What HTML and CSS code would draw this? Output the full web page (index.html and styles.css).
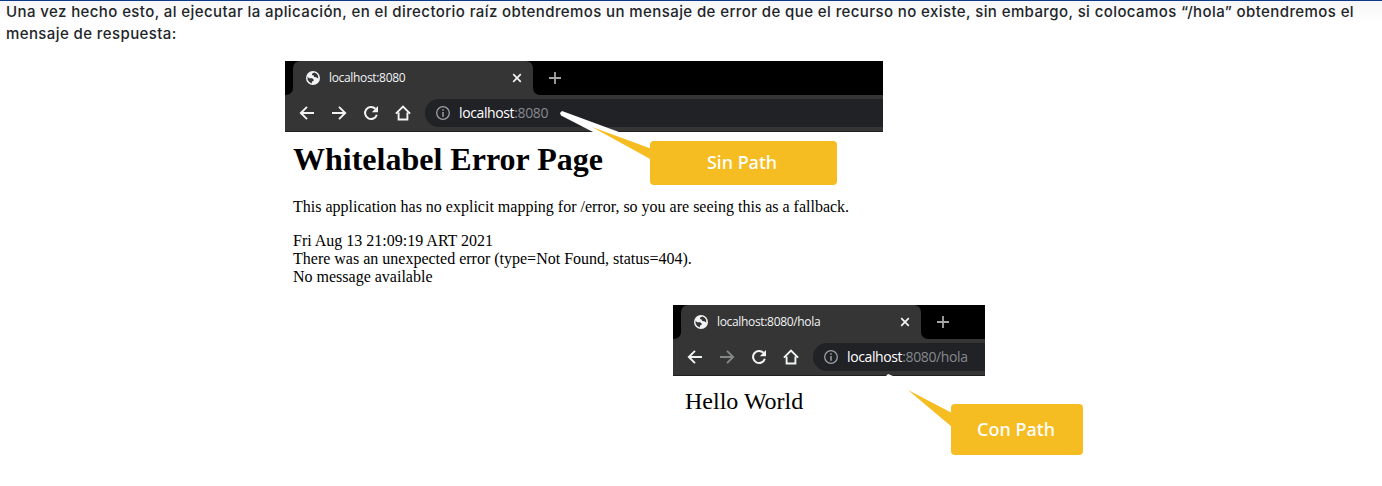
FILE: index.html
```
<!DOCTYPE html>
<html lang="es">
<head>
<meta charset="utf-8">
<title>Mensaje de respuesta</title>
<link rel="stylesheet" href="styles.css">
</head>
<body>
<svg class="defs" width="0" height="0" aria-hidden="true">
  <symbol id="globe" viewBox="0 0 14 14"><circle cx="7" cy="7" r="7" fill="#f1f3f4"/><path d="M1.5 5.8L3.2 7.2H6.2L7.6 8.6V9.9L6 10.6L5.8 12.4L3.2 11L1.7 8.7ZM8.2 1.6L6 2.7V4.1L7.7 4.4L8.2 6.1L10.2 6.3L12.3 7.6L12 4.6L10.4 2.5Z" fill="#353535"/></symbol>
  <symbol id="close" viewBox="0 0 10 10"><path d="M1.2 1.2L8.8 8.8M8.8 1.2L1.2 8.8" fill="none" stroke="#f1f3f4" stroke-width="1.7"/></symbol>
  <symbol id="plus" viewBox="0 0 12 12"><path d="M6 0V12M0 6H12" fill="none" stroke="#a5a5a5" stroke-width="1.8"/></symbol>
  <symbol id="back" viewBox="0 0 16 16"><path d="M15 8H2M8 1.8L1.8 8L8 14.2" fill="none" stroke="currentColor" stroke-width="1.9"/></symbol>
  <symbol id="forward" viewBox="0 0 16 16"><path d="M1 8H14M8 1.8L14.2 8L8 14.2" fill="none" stroke="currentColor" stroke-width="1.9"/></symbol>
  <symbol id="reload" viewBox="0 0 16 16"><path d="M13.8 9.7A6 6 0 1 1 12.4 3.8" fill="none" stroke="#f1f3f4" stroke-width="2"/><path d="M15 1V7.2H8.8Z" fill="#f1f3f4"/></symbol>
  <symbol id="home" viewBox="0 0 16 16"><path d="M.9 8.6L8 1.5L15.1 8.6M3.6 7.5V14.5H12.4V7.5" fill="none" stroke="#f1f3f4" stroke-width="1.9"/></symbol>
  <symbol id="info" viewBox="0 0 14 14"><circle cx="7" cy="7" r="6.3" fill="none" stroke="#9aa0a6" stroke-width="1.3"/><path d="M7 3.2V4.8M7 6V10.7" stroke="#9aa0a6" stroke-width="1.5"/></symbol>
</svg>
<main class="article">
  <p class="intro"><span class="line first">Una vez hecho esto, al ejecutar la aplicación, en el directorio raíz obtendremos un mensaje de error de que el recurso no existe, sin embargo, si colocamos “/hola” obtendremos el</span> <span class="line second">mensaje de respuesta:</span></p>

  <section class="shot shot-error">
    <div class="browser">
      <div class="tabs">
        <div class="corner"></div>
        <div class="tab"><svg class="globe"><use href="#globe"/></svg><span class="tab-title">localhost:8080</span><svg class="close"><use href="#close"/></svg></div>
        <div class="rest"><svg class="plus"><use href="#plus"/></svg></div>
      </div>
      <div class="toolbar">
        <svg class="nav"><use href="#back"/></svg><svg class="nav"><use href="#forward"/></svg><svg class="nav"><use href="#reload"/></svg><svg class="nav"><use href="#home"/></svg>
        <div class="address"><svg class="info"><use href="#info"/></svg><span class="url"><b>localhost</b>:8080</span></div>
      </div>
    </div>
    <div class="page">
      <h1>Whitelabel Error Page</h1>
      <p class="fallback">This application has no explicit mapping for /error, so you are seeing this as a fallback.</p>
      <div>Fri Aug 13 21:09:19 ART 2021</div>
      <div>There was an unexpected error (type=Not Found, status=404).</div>
      <div>No message available</div>
    </div>
    <svg class="tail tail-sin" viewBox="0 0 92 50"><path d="M0 2L2 0L59 21H33L1 4.5Z" fill="#fff"/><path d="M32 16L92 38V49Z" fill="#f5bd22"/></svg>
    <div class="callout sin">Sin Path</div>
  </section>

  <section class="shot shot-hello">
    <div class="browser">
      <div class="tabs">
        <div class="corner"></div>
        <div class="tab"><svg class="globe"><use href="#globe"/></svg><span class="tab-title">localhost:8080/hola</span><svg class="close"><use href="#close"/></svg></div>
        <div class="rest"><svg class="plus"><use href="#plus"/></svg></div>
      </div>
      <div class="toolbar">
        <svg class="nav"><use href="#back"/></svg><svg class="nav dim"><use href="#forward"/></svg><svg class="nav"><use href="#reload"/></svg><svg class="nav"><use href="#home"/></svg>
        <div class="address"><svg class="info"><use href="#info"/></svg><span class="url"><b>localhost</b>:8080/hola</span></div>
      </div>
    </div>
    <div class="hello">Hello World</div>
    <svg class="tail tail-con" viewBox="0 0 66 54"><path d="M0 2L2 0L7 2H1Z" fill="#fff"/><path d="M22 16L66 39V53Z" fill="#f5bd22"/></svg>
    <div class="callout con">Con Path</div>
  </section>
</main>
</body>
</html>
```
FILE: styles.css
```
* { box-sizing: border-box; }
body { margin: 0; background: #fff; }
svg { display: block; flex: none; }
.defs { position: absolute; }
.article {
  height: 486px;
  overflow: hidden;
  border-top: 1px solid #0b3a8c;
  background: linear-gradient(#f6f6f7, #fff 22px);
}
.intro {
  margin: 0;
  padding-left: 6px;
  height: 60px;
  font: 500 15px/22px Inter, sans-serif;
  color: #212529;
}
.line { display: block; white-space: nowrap; width: max-content; letter-spacing: 0.403px; }
.shot { position: relative; }
.shot-error { margin-left: 285px; width: 598px; height: 244px; }
.shot-hello { margin-left: 673px; width: 312px; }
.browser { height: 71px; background: #353535; border-bottom: 1px solid #1f1f20; }
.tabs { display: flex; height: 34px; background: linear-gradient(#000 0 17px, #353535 17px); }
.corner { width: 8px; background: #000; border-bottom-right-radius: 7px; }
.tab {
  width: 240px;
  display: flex;
  align-items: center;
  padding: 0 11px 0 13px;
  background: #353535;
  border-radius: 7px 7px 0 0;
}
.globe { width: 14px; height: 14px; margin-right: 9px; }
.tab-title { font: 12px/16px "Open Sans", sans-serif; color: #f1f3f4; letter-spacing: -0.33px; }
.close { width: 10px; height: 10px; margin-left: auto; }
.rest { flex: 1; background: #000; border-bottom-left-radius: 7px; padding: 11px 0 0 16px; }
.plus { width: 12px; height: 12px; }
.toolbar { display: flex; align-items: center; gap: 16px; height: 36px; padding-left: 14px; color: #f1f3f4; }
.nav { width: 16px; height: 16px; }
.dim { color: #858687; }
.address {
  flex: 1;
  display: flex;
  align-items: center;
  height: 28px;
  margin-left: -2px;
  padding-left: 11px;
  border-radius: 14px 0 0 14px;
  background: #202226;
}
.info { width: 14px; height: 14px; margin-right: 9px; }
.url { font: 14px/20px "Open Sans", sans-serif; color: #85898d; letter-spacing: -0.38px; white-space: nowrap; }
.url b { font-weight: 400; color: #fff; }
.page { padding: 9px 0 0 8px; font: 16px/18px "Liberation Serif", serif; color: #000; white-space: nowrap; }
.page h1 { margin: 0; font-size: 32px; line-height: 37px; }
.fallback { margin: 20px 0 16px; }
.hello { padding: 11px 0 0 12px; font: 24px/28px "Liberation Serif", serif; color: #000; }
.callout {
  position: absolute;
  display: flex;
  align-items: center;
  justify-content: center;
  background: #f5bd22;
  border-radius: 4px;
  color: #fff;
  font: 500 18px/24px "Noto Sans", sans-serif;
  white-space: nowrap;
}
.sin { left: 365px; top: 80px; width: 187px; height: 44px; padding: 0 3px 2px 0; }
.con { left: 278px; top: 99px; width: 132px; height: 51px; padding: 0 2px 2px 0; }
.tail { position: absolute; }
.tail-sin { left: 275px; top: 50px; width: 92px; height: 50px; }
.tail-con { left: 213px; top: 69px; width: 66px; height: 54px; }
```
